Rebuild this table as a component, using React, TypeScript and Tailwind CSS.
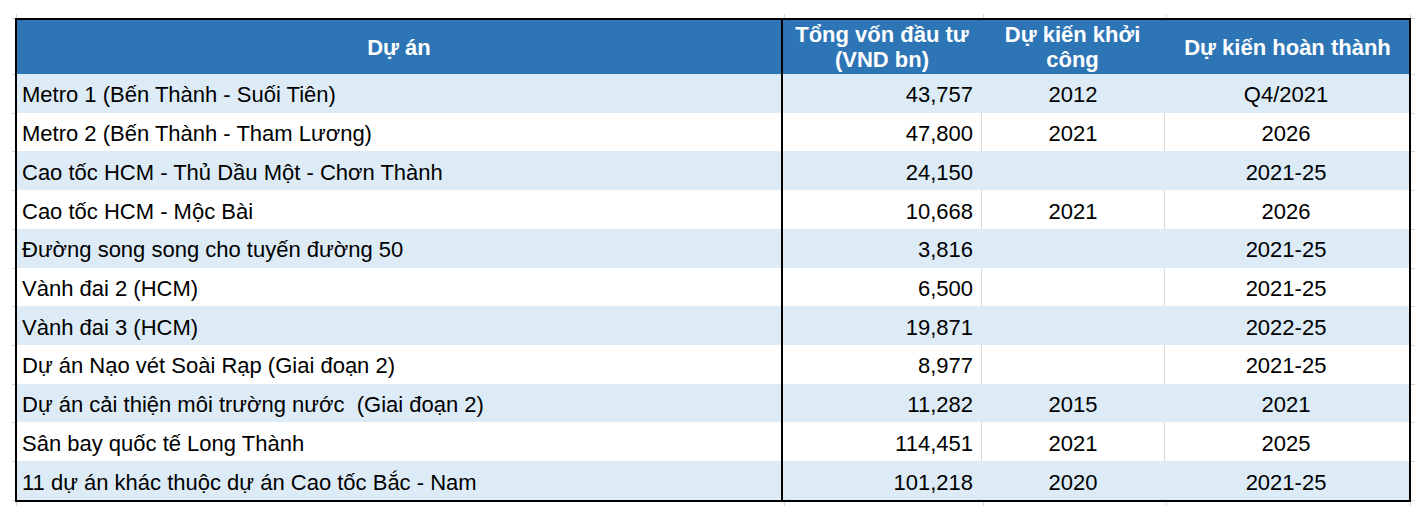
const rows = [
  ["Metro 1 (Bến Thành - Suối Tiên)", "43,757", "2012", "Q4/2021"],
  ["Metro 2 (Bến Thành - Tham Lương)", "47,800", "2021", "2026"],
  ["Cao tốc HCM - Thủ Dầu Một - Chơn Thành", "24,150", "", "2021-25"],
  ["Cao tốc HCM - Mộc Bài", "10,668", "2021", "2026"],
  ["Đường song song cho tuyến đường 50", "3,816", "", "2021-25"],
  ["Vành đai 2 (HCM)", "6,500", "", "2021-25"],
  ["Vành đai 3 (HCM)", "19,871", "", "2022-25"],
  ["Dự án Nạo vét Soài Rạp (Giai đoạn 2)", "8,977", "", "2021-25"],
  ["Dự án cải thiện môi trường nước  (Giai đoạn 2)", "11,282", "2015", "2021"],
  ["Sân bay quốc tế Long Thành", "114,451", "2021", "2025"],
  ["11 dự án khác thuộc dự án Cao tốc Bắc - Nam", "101,218", "2020", "2021-25"],
];

// little gridline stubs of the surrounding sheet, above and below the table
function ColumnStubs() {
  return (
    <div className="flex h-[4px]">
      <div className="w-[4px]" />
      <div className="w-[1px] bg-[#d4d4d4]" />
      <div className="w-[767px]" />
      <div className="w-[1px] bg-[#d4d4d4]" />
      <div className="w-[198px]" />
      <div className="w-[1px] bg-[#d4d4d4]" />
      <div className="w-[182px]" />
      <div className="w-[1px] bg-[#d4d4d4]" />
      <div className="w-[243px]" />
      <div className="w-[1px] bg-[#d4d4d4]" />
    </div>
  );
}

function RowStubs({ width }: { width: string }) {
  return (
    <div className={`flex flex-col ${width}`}>
      <div className="h-[56px] border-t border-[#d4d4d4]" />
      {rows.map((_, i) => (
        <div key={i} className="h-[38.727px] border-t border-[#d4d4d4]" />
      ))}
      <div className="h-[2px] border-t border-[#d4d4d4]" />
    </div>
  );
}

export default function App() {
  return (
    <div
      className="min-h-screen bg-white pt-[14px] pl-[12px] text-[22px] text-black"
      style={{ fontFamily: '"Liberation Sans", Arial, sans-serif' }}
    >
      <div className="flex w-fit flex-col">
        <ColumnStubs />
        <div className="flex">
          <RowStubs width="w-[3px]" />
          <div className="flex w-[1396px] flex-col border-2 border-black">
            <div className="flex h-[54px] bg-[#2e75b6] font-bold text-white">
              <div className="flex w-[766px] items-center justify-center border-r-2 border-black">
                Dự án
              </div>
              <div className="flex w-[198px] items-center justify-center text-center leading-[25px]">
                Tổng vốn đầu tư
                <br />
                (VND bn)
              </div>
              <div className="flex w-[183px] items-center justify-center text-center leading-[25px]">
                Dự kiến khởi
                <br />
                công
              </div>
              <div className="flex w-[243px] items-center justify-center pl-[4px]">
                Dự kiến hoàn thành
              </div>
            </div>
            {rows.map((r, i) => {
              const shaded = i % 2 === 0;
              const line = shaded ? "border-transparent" : "border-[#d9d9d9]";
              return (
                <div
                  key={i}
                  className={`flex h-[38.727px] ${shaded ? "bg-[#ddebf7]" : "bg-white"}`}
                >
                  <div className="flex w-[766px] items-center whitespace-pre border-r-2 border-black pl-[5px] pt-[3px]">
                    {r[0]}
                  </div>
                  <div className="flex w-[198px] items-center justify-end pr-[8px] pt-[3px]">
                    {r[1]}
                  </div>
                  <div className={`flex w-[183px] items-center justify-center border-l pt-[3px] ${line}`}>
                    {r[2]}
                  </div>
                  <div className={`flex w-[243px] items-center justify-center border-l pt-[3px] ${line}`}>
                    {r[3]}
                  </div>
                </div>
              );
            })}
          </div>
          <RowStubs width="w-[4px]" />
        </div>
        <ColumnStubs />
      </div>
    </div>
  );
}
